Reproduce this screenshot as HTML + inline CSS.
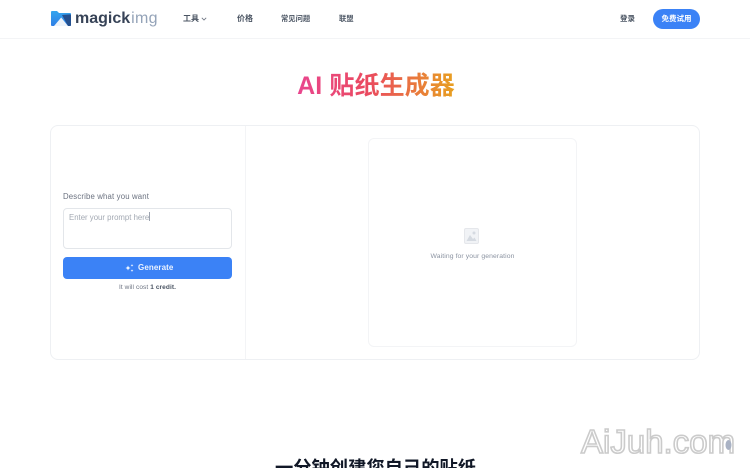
<!DOCTYPE html>
<html lang="zh">
<head>
<meta charset="utf-8">
<title>AI 贴纸生成器</title>
<style>
*{box-sizing:border-box;margin:0;padding:0}
html,body{width:750px;height:468px;overflow:hidden;background:#fff}
body{position:relative;font-family:"Liberation Sans","Noto Sans CJK SC",sans-serif;color:#1f2937}
.abs{position:absolute;white-space:nowrap}
.nav{font-size:8px;font-weight:700;color:#4b5563;line-height:12px;top:13px}
</style>
</head>
<body>
<div class="abs" style="left:0;top:38px;width:750px;height:1px;background:#f3f4f6"></div>

<svg class="abs" style="left:51px;top:11px" width="20" height="15" viewBox="0 0 20 15">
<defs><linearGradient id="g" x1="0" y1="0" x2="0" y2="1"><stop offset="0" stop-color="#35a5ee"/><stop offset="1" stop-color="#2f7fe6"/></linearGradient></defs>
<path d="M0 1Q0 0 1 0H6L8 2H19Q20 2 20 3V14Q20 15 19 15H1Q0 15 0 14Z" fill="url(#g)"/>
<path d="M11 4L19 3.4Q20 3.4 20 4.4V14Q20 15 19 15H17Z" fill="#24508f"/>
<path d="M3 15L10.2 6.5L17 15Z" fill="#edf3fa"/>
</svg>
<div class="abs" style="left:75px;top:8px;font-size:16px;line-height:21px;font-weight:700;color:#374357">magick<span style="font-weight:400;color:#94a3b8;margin-left:1px;letter-spacing:.3px">img</span></div>

<div class="abs nav" style="left:183px">工具</div>
<svg class="abs" style="left:201px;top:17px" width="6" height="4" viewBox="0 0 6 4"><path d="M.8.8L3 3L5.2.8" fill="none" stroke="#6b7280" stroke-width=".8"/></svg>
<div class="abs nav" style="left:237px">价格</div>
<div class="abs nav" style="left:281px;font-size:7.3px">常见问题</div>
<div class="abs nav" style="left:339px;font-size:7.3px">联盟</div>
<div class="abs nav" style="left:620px;font-size:7.5px">登录</div>
<div class="abs" style="left:653px;top:9px;width:47px;height:20px;border-radius:10px;background:#3b82f6;color:#fff;font-size:7.5px;font-weight:700;line-height:20px;text-align:center">免费试用</div>

<div class="abs" style="left:0;width:750px;top:69px;text-align:center;font-size:25px;line-height:34px;font-weight:700;padding-left:2px;letter-spacing:.1px"><span style="background:linear-gradient(90deg,#e9468f 0%,#ea4a5f 45%,#e8a020 100%);-webkit-background-clip:text;background-clip:text;color:transparent">AI 贴纸生成器</span></div>

<div class="abs" style="left:50px;top:125px;width:650px;height:235px;border:1px solid #eef0f3;border-radius:8px"></div>
<div class="abs" style="left:245px;top:126px;width:1px;height:233px;background:#f3f4f6"></div>

<div class="abs" style="left:63px;top:191px;font-size:7.8px;line-height:11px;color:#6b7280;letter-spacing:.15px">Describe what you want</div>
<div class="abs" style="left:63px;top:208px;width:169px;height:41px;border:1px solid #e3e6ea;border-radius:4px"></div>
<div class="abs" style="left:69px;top:212px;font-size:7.8px;line-height:11px;color:#a3a9b3">Enter your prompt here</div>
<div class="abs" style="left:149px;top:212px;width:1px;height:9px;background:#9ca3af"></div>
<div class="abs" style="left:63px;top:257px;width:169px;height:22px;border-radius:4px;background:#3b82f6"></div>
<svg class="abs" style="left:125px;top:263px" width="9" height="10" viewBox="0 0 9 10"><path d="M3 2.5L3.7 4.3L5.5 5L3.7 5.7L3 7.5L2.3 5.7L.5 5L2.3 4.3Z M7 1L7.4 2L8.4 2.4L7.4 2.8L7 3.8L6.6 2.8L5.6 2.4L6.6 2Z M7 6.2L7.4 7.2L8.4 7.6L7.4 8L7 9L6.6 8L5.6 7.6L6.6 7.2Z" fill="#fff"/></svg>
<div class="abs" style="left:138px;top:262px;font-size:8px;line-height:11px;font-weight:700;color:#eaf2ff;letter-spacing:.1px">Generate</div>
<div class="abs" style="left:63px;width:169px;top:283px;text-align:center;font-size:6.5px;line-height:10px;color:#6b7280;letter-spacing:.1px">It will cost <b style="color:#4b5563">1 credit.</b></div>

<div class="abs" style="left:368px;top:138px;width:209px;height:209px;border:1px solid #f3f4f6;border-radius:6px"></div>
<svg class="abs" style="left:464px;top:228px" width="15" height="16" viewBox="0 0 15 16"><rect x=".5" y=".5" width="14" height="15" rx="1.5" fill="#f1f3f6" stroke="#e5e7eb"/><circle cx="10" cy="5" r="1.5" fill="#d5dae1"/><path d="M2.5 13L6 7L9 11L10.5 9.5L12.5 13Z" fill="#d5dae1"/></svg>
<div class="abs" style="left:368px;width:209px;top:252px;text-align:center;font-size:6.8px;line-height:10px;color:#8b93a1;letter-spacing:.1px">Waiting for your generation</div>

<div class="abs" style="left:0;width:750px;top:455px;text-align:center;font-size:18.3px;line-height:26px;font-weight:700;color:#111827;padding-left:1px">一分钟创建您自己的贴纸</div>

<div class="abs" style="left:581px;top:423px;font-size:33px;line-height:38px;color:#fff;-webkit-text-stroke:1.6px #cbcbcb">AiJuh.com</div>
<svg class="abs" style="left:725px;top:439px" width="7" height="12" viewBox="0 0 7 12"><ellipse cx="3.5" cy="6" rx="3" ry="5" fill="#a9b2c4"/></svg>
</body>
</html>
